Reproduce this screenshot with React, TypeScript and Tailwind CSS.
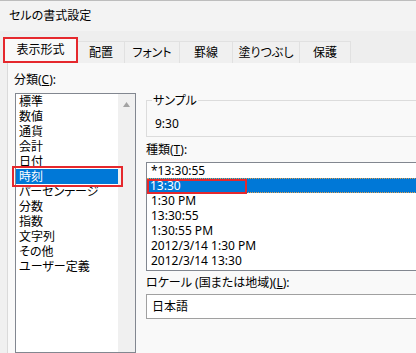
import React from "react"

const CATEGORIES = ["標準", "数値", "通貨", "会計", "日付", "時刻", "パーセンテージ", "分数", "指数", "文字列", "その他", "ユーザー定義"]
const FORMATS = ["*13:30:55", "13:30", "1:30 PM", "13:30:55", "1:30:55 PM", "2012/3/14 1:30 PM", "2012/3/14 13:30"]
const TABS = [
  { label: "配置", w: "w-[47px]" },
  { label: "フォント", w: "w-[55px]" },
  { label: "罫線", w: "w-[53px]" },
  { label: "塗りつぶし", w: "w-[67px]" },
  { label: "保護", w: "w-[51px]" },
]

export default function App() {
  return (
    <div className="flex h-[353px] w-[416px] flex-col overflow-hidden border-t border-[#bdbdbd] bg-[#f0f0f0] font-['Noto_Sans','Noto_Sans_CJK_JP',sans-serif] text-[12px] text-black [font-feature-settings:'palt']">
      {/* title */}
      <div className="h-[30px] shrink-0 bg-[#f3f3f3] pl-[9px] leading-[30px]">セルの書式設定</div>

      {/* tabs */}
      <div className="flex h-[32px] shrink-0 items-end bg-[#eeeeee] pl-[3px]">
        <div className="flex h-[26px] w-[75px] items-center justify-center border-2 border-[#e5282d] bg-[#f9f9f9]">表示形式</div>
        {TABS.map((t) => (
          <div key={t.label} className={`flex h-[22px] ${t.w} items-center justify-center border-t border-r border-[#e1e1e1] bg-[#f0f0f0]`}>
            {t.label}
          </div>
        ))}
      </div>

      {/* panel */}
      <div className="flex min-h-0 flex-1 pl-[7px]">
        <div className="flex flex-1 border-l border-[#dadada] bg-[#f9f9f9] pl-[7px]">
          {/* category column */}
          <div className="flex w-[121px] shrink-0 flex-col">
            <div className="mt-[9px] -ml-[1px] h-[15px] leading-[15px]">
              分類(<span className="underline">C</span>):
            </div>
            <div className="mt-[6px] flex h-[300px] border border-[#828790] bg-white">
              <div className="flex-1">
                {CATEGORIES.map((c) =>
                  c === "時刻" ? (
                    <div key={c} className="relative h-[15px] bg-[#0078d7] pl-[3px] leading-[15px] whitespace-nowrap text-white">
                      {c}
                      <div className="absolute -top-[3px] -bottom-[3px] -left-[4px] -right-[5px] z-10 border-2 border-[#e5282d]" />
                    </div>
                  ) : (
                    <div key={c} className="h-[15px] pl-[3px] leading-[15px] whitespace-nowrap">
                      {c}
                    </div>
                  )
                )}
              </div>
              <div className="flex w-[17px] justify-center bg-[#f0f0f0] pt-[8px]">
                <svg width="7" height="5" viewBox="0 0 7 5">
                  <polygon points="3.5,0 7,5 0,5" fill="#a3a3a3" />
                </svg>
              </div>
            </div>
          </div>

          {/* right column */}
          <div className="ml-[10px] flex w-[300px] shrink-0 flex-col">
            <div className="mt-[37px] h-[37px] border border-[#dcdcdc]">
              <div className="-mt-[8px] ml-[5px] w-fit bg-[#f9f9f9] px-[1px] leading-[15px]">サンプル</div>
              <div className="mt-[8px] pl-[8px] leading-[15px]">9:30</div>
            </div>

            <div className="mt-[5px] h-[15px] leading-[15px]">
              種類(<span className="underline">T</span>):
            </div>
            <div className="mt-[5px] border border-[#828790] bg-white pb-[2px]">
              {FORMATS.map((f, i) =>
                i === 1 ? (
                  <div key={i} className="relative h-[15px] border-y border-dotted border-[#e0a050] bg-[#0078d7] pl-[3px] leading-[13px] whitespace-nowrap text-white">
                    {f}
                    <div className="absolute top-0 -bottom-[2px] left-0 w-[100px] border-2 border-[#e5282d]" />
                  </div>
                ) : (
                  <div key={i} className="h-[15px] pl-[4px] leading-[15px] whitespace-nowrap">
                    {f}
                  </div>
                )
              )}
            </div>

            <div className="mt-[4px] h-[15px] leading-[15px] whitespace-nowrap">
              ロケール (国または地域)(<span className="underline">L</span>):
            </div>
            <div className="mt-[4px] h-[25px] border border-[#a0a0a0] bg-white pl-[5px] leading-[23px]">日本語</div>
          </div>
        </div>
      </div>
    </div>
  )
}
